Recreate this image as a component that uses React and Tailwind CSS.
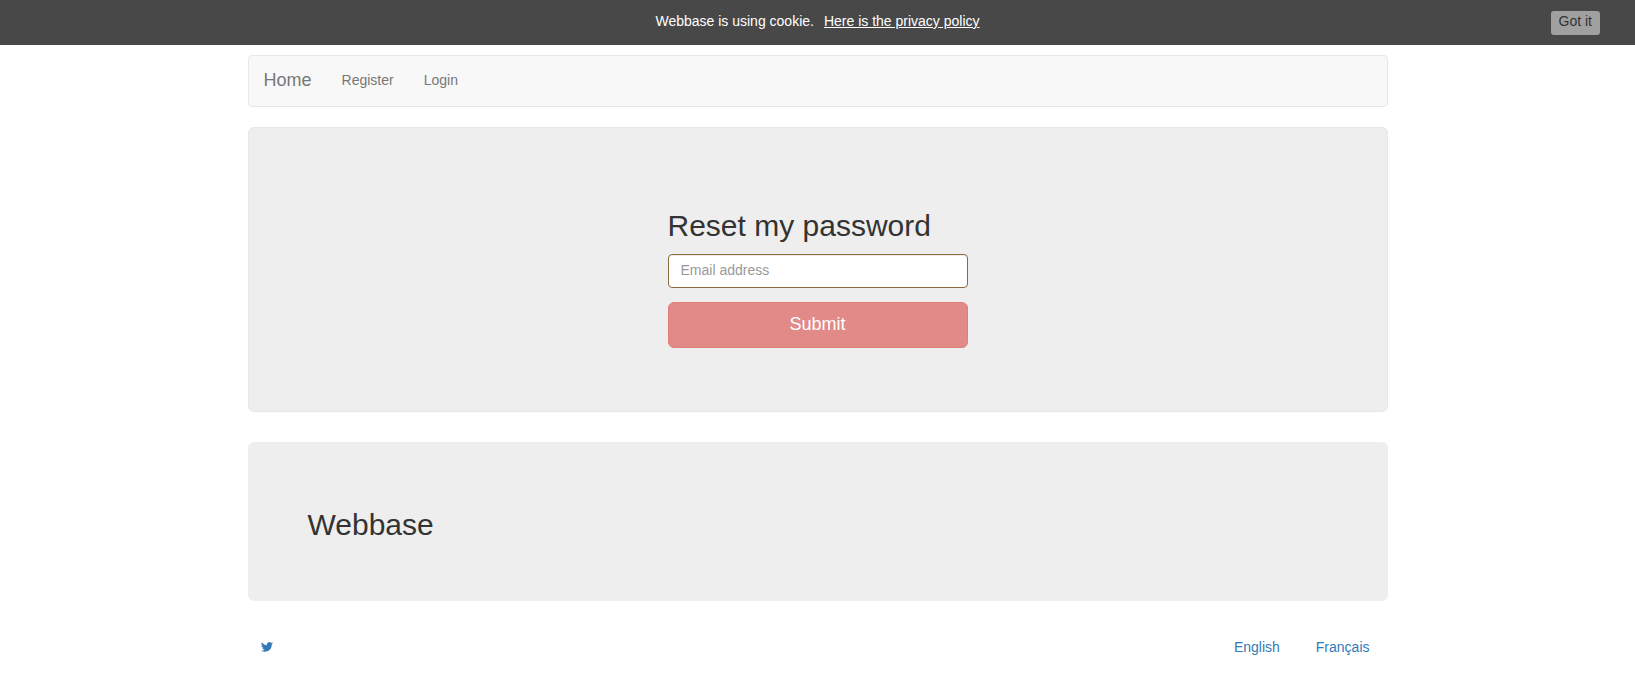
import React from 'react';

function CookieBar() {
  return (
    <div className="grid h-[45px] grid-cols-[1fr_auto_1fr] items-start bg-[#484848] px-[35px] text-white">
      <span />
      <p className="pt-[11px]">
        Webbase is using cookie.
        <a href="#privacy" className="ml-[10px] underline">Here is the privacy policy</a>
      </p>
      <button type="button" className="mt-[11px] h-6 justify-self-end rounded-[3px] bg-[#a0a0a0] px-2 pb-1 text-[#333]">
        Got it
      </button>
    </div>
  );
}

function Navbar() {
  return (
    <nav className="flex h-[52px] items-center rounded-[4px] border border-[#e7e7e7] bg-[#f8f8f8] px-[15px] pb-[2px] text-[#777]">
      <a href="#home" className="text-[18px]">Home</a>
      <a href="#register" className="ml-[30px]">Register</a>
      <a href="#login" className="ml-[30px]">Login</a>
    </nav>
  );
}

function ResetForm() {
  return (
    <main className="mt-5 rounded-[6px] border border-[#e7e7e7] bg-[#eee] pt-[81px] pb-[63px]">
      <form className="mx-auto max-w-[300px]" onSubmit={(e) => e.preventDefault()}>
        <h2 className="text-[30px] leading-[33px] font-medium">Reset my password</h2>
        <input
          type="email"
          aria-label="Email address"
          placeholder="Email address"
          className="mt-3 block h-[34px] w-full rounded-[4px] border border-[#8a6d3b] bg-white px-3 pb-[2px] shadow-[inset_0_1px_1px_rgba(0,0,0,0.075)] outline-none placeholder:text-[#999]"
        />
        <button type="submit" className="mt-[14px] block h-[46px] w-full rounded-[6px] border border-[#df7f7c] bg-[#e28a87] pb-[2px] text-[18px] text-white">
          Submit
        </button>
      </form>
    </main>
  );
}

function Footer() {
  return (
    <footer className="flex items-center justify-between pt-9 pr-[18px] pl-[13px] text-[#337ab7]">
      <a href="#twitter" aria-label="Twitter">
        <svg viewBox="0 0 24 24" className="size-3" fill="currentColor" aria-hidden="true">
          <path d="M24 4.6a10 10 0 0 1-2.8.8 5 5 0 0 0 2.1-2.7 10 10 0 0 1-3.1 1.2 4.9 4.9 0 0 0-8.4 4.5A14 14 0 0 1 1.7 3.1a4.9 4.9 0 0 0 1.5 6.6 5 5 0 0 1-2.2-.6v.1a4.9 4.9 0 0 0 3.9 4.8 5 5 0 0 1-2.2.1 4.9 4.9 0 0 0 4.6 3.4A9.9 9.9 0 0 1 0 19.5a14 14 0 0 0 7.5 2.2c9.1 0 14-7.5 14-14v-.6A10 10 0 0 0 24 4.6z" />
        </svg>
      </a>
      <div className="flex gap-9">
        <a href="#en">English</a>
        <a href="#fr">Français</a>
      </div>
    </footer>
  );
}

export default function App() {
  return (
    <div className="min-h-screen bg-white font-['Liberation_Sans',Arial,sans-serif] text-[14px] leading-5 text-[#333]">
      <CookieBar />
      <div className="mx-auto max-w-[1140px] pt-[10px]">
        <Navbar />
        <ResetForm />
        <section className="mt-[30px] rounded-[6px] bg-[#eee] px-[60px] pt-[66px] pb-[60px]">
          <h2 className="text-[30px] leading-[33px] font-medium">Webbase</h2>
        </section>
        <Footer />
      </div>
    </div>
  );
}
